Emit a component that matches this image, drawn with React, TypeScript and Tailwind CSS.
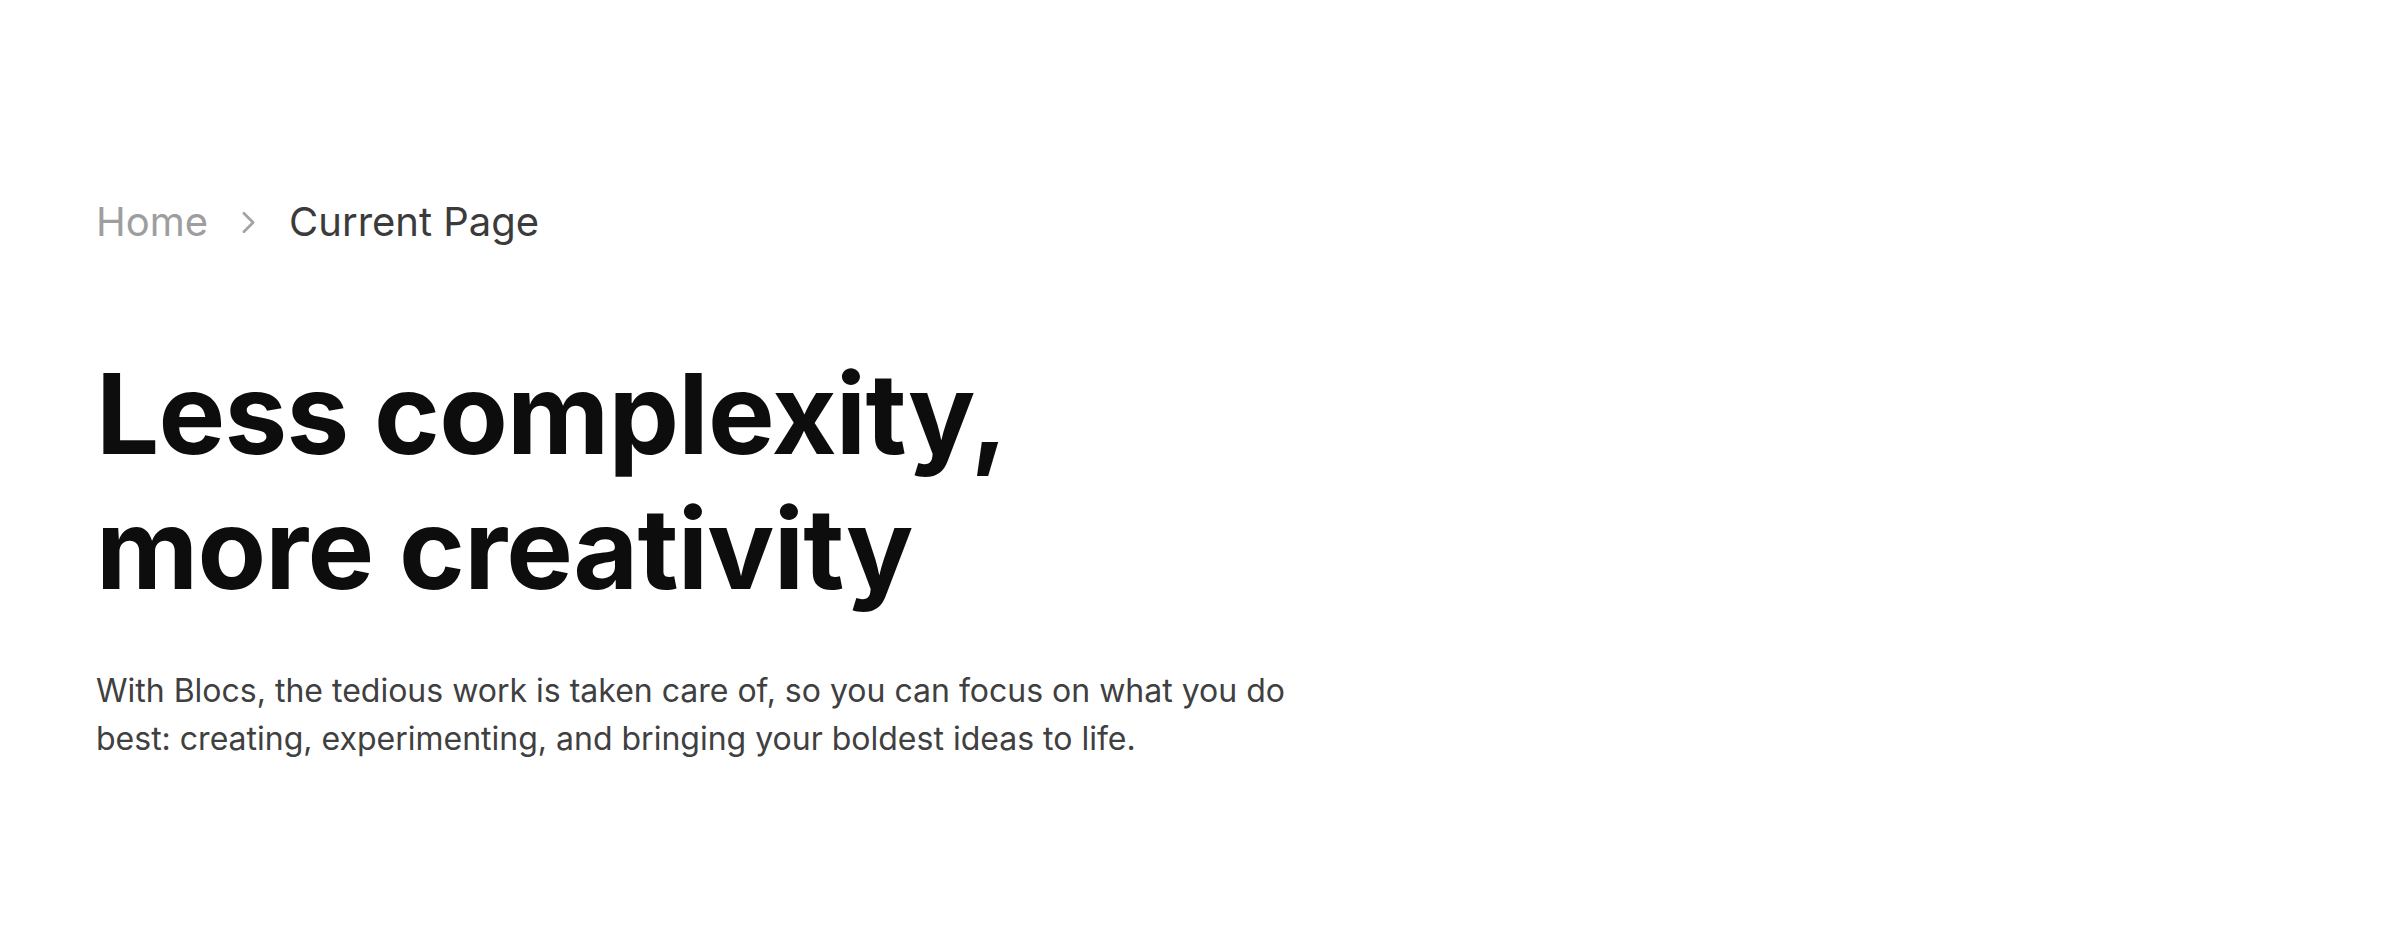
import { ChevronRight } from 'lucide-react';

export default function App() {
  return (
    <div className="min-h-[952px] w-full bg-white font-['Inter',sans-serif]">
      <section className="px-[96px] pt-[192px] pb-24">
        {/* Breadcrumb */}
        <nav className="flex items-center gap-[22px] text-[40px] leading-[60px]">
          <a href="#" className="text-[#9e9e9e]">Home</a>
          <ChevronRight className="w-[37px] h-[37px] text-[#a3a3a3]" strokeWidth={1.75} />
          <span className="text-[#3b3b3b]">Current Page</span>
        </nav>

        <h1 className="mt-[94px] text-[112px] leading-[135px] font-bold tracking-[-0.007em] text-[#0d0d0d]">
          Less complexity,
          <br />
          more creativity
        </h1>

        <p className="mt-[51px] max-w-[1220px] text-[32px] leading-[48px] text-[#404040]">
          With Blocs, the tedious work is taken care of, so you can focus on what you do best: creating,
          experimenting, and bringing your boldest ideas to life.
        </p>
      </section>
    </div>
  );
}
